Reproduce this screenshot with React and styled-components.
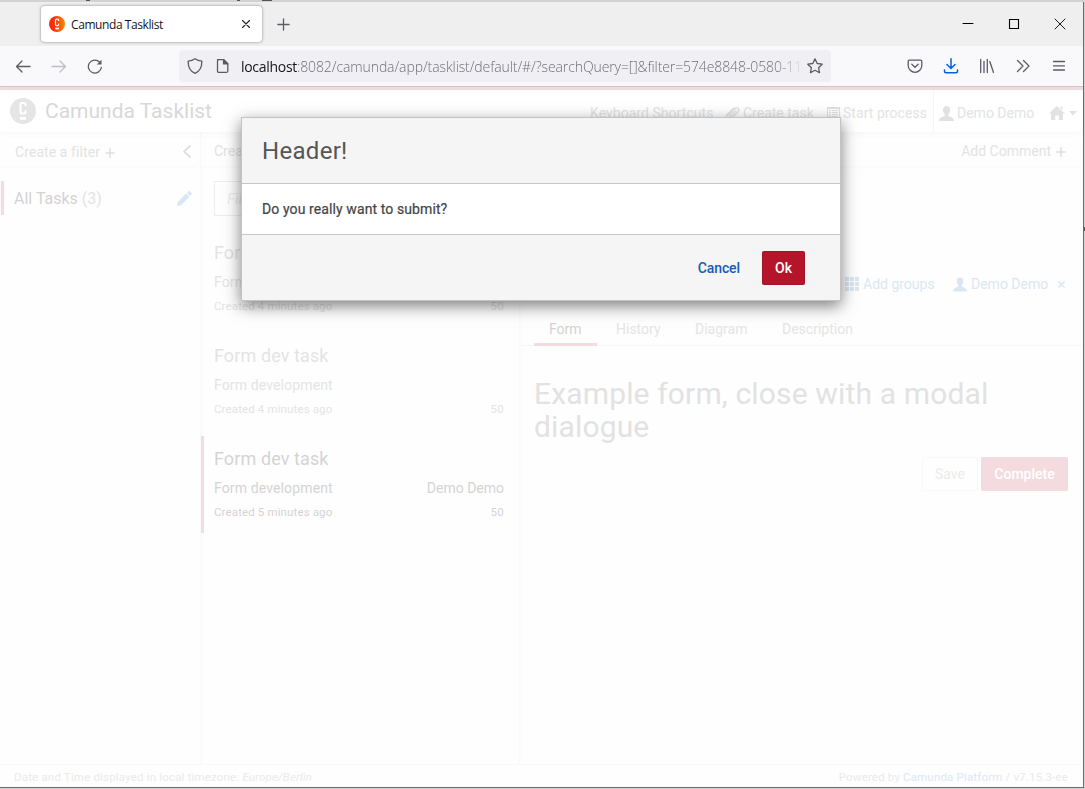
import React from 'react';
import styled, { createGlobalStyle } from 'styled-components';

const GlobalStyle = createGlobalStyle`
  * { box-sizing: border-box; }
  body { margin: 0; overflow: hidden; background: #d2d2d2; font-family: Roboto, 'Liberation Sans', sans-serif; }
  svg { display: block; flex: none; }
`;

const Desktop = styled.div`
  width: 1085px; height: 789px; padding-top: 2px; position: relative;
  background: #d2d2d2;
`;
const Behind = styled.i`
  position: absolute; top: ${p => p.$y || 0}px; left: ${p => p.$x}px;
  width: ${p => p.$w}px; height: ${p => p.$h || 1}px; background: #55555c;
`;
const Window = styled.div`
  width: 1084px; height: 786px; display: flex; flex-direction: column;
  border-right: 1px solid #6b6b6b; border-bottom: 1px solid #6b6b6b; background: #fff;
`;

/* Browser chrome */
const TabStrip = styled.div`
  height: 44px; flex: none; background: #efefef; display: flex; align-items: center; padding: 0 17px 0 41px;
`;
const BrowserTab = styled.div`
  width: 221px; height: 36px; background: #fff; border-radius: 4px; display: flex; align-items: center;
  padding: 0 10px 0 8px; box-shadow: 0 0 3px rgba(60, 60, 80, 0.6);
  font: 12px 'Open Sans', 'Noto Sans', sans-serif; color: #15141a;
`;
const TabTitle = styled.span`
  flex: 1; margin-left: 6px; white-space: nowrap; letter-spacing: -0.42px;
`;
const NewTab = styled.div`margin-left: 15px; flex: 1;`;
const WindowButtons = styled.div`display: flex; gap: 34px; align-items: center;`;
const Toolbar = styled.div`
  height: 40px; flex: none; background: #f9f9fb; display: flex; align-items: center; padding: 0 16px 0 15px;
`;
const NavButtons = styled.div`display: flex; gap: 20px; width: 164px;`;
const AddressBar = styled.div`
  width: 652px; height: 32px; border-radius: 4px; background: #f0f0f4; display: flex; align-items: center; padding: 0 8px;
`;
const Url = styled.div`
  width: 563px; margin: 1px 3px 0 10px; overflow: hidden; white-space: nowrap;
  font: 14px 'Open Sans', 'Noto Sans', sans-serif; font-weight: 300; letter-spacing: -0.1px; color: #6e6e78;
  mask-image: linear-gradient(to right, #000 535px, transparent 563px);
  b { color: #15141a; font-weight: 400; letter-spacing: -0.3px; }
`;
const ToolButtons = styled.div`display: flex; gap: 20px; margin-left: auto;`;

/* Tasklist page */
const Page = styled.div`
  position: relative; flex: 1; min-height: 0; display: flex; flex-direction: column; background: #fefefe;
  border-top: 1px solid #c9c9cc; font-size: 14px; color: #e3e3e3;
`;
const BrandLine = styled.div`height: 3px; flex: none; background: #f4dbdf;`;
const Label = styled.span`
  display: block; flex: none; white-space: nowrap; width: ${p => (p.$w ? p.$w + 'px' : 'auto')};
  letter-spacing: ${p => p.$ls || 0}px; font-style: ${p => (p.$italic ? 'italic' : 'normal')};
`;
const Header = styled.header`
  position: relative; height: 42px; flex: none; background: #fff; display: flex; align-items: center;
  padding: 0 0 0 10px; box-shadow: 0 1px 8px rgba(0, 0, 0, 0.04);
`;
const Brand = styled.div`
  display: flex; align-items: center; gap: 9px; font-size: 21px; line-height: 27px; color: #d8d8d8; width: 580px; flex: none;
`;
const HeaderItem = styled.div`
  display: flex; align-items: center; gap: ${p => p.$gap || 3}px; margin-right: ${p => p.$mr || 0}px;
  padding-top: 4px; font-size: 14px; flex: none;
`;
const Divider = styled.div`width: 1px; height: 42px; background: #f5f5f5; margin-right: 5px;`;
const Columns = styled.div`flex: 1; min-height: 0; display: flex;`;
const Column = styled.section`
  width: ${p => (p.$w ? p.$w + 'px' : 'auto')}; flex: ${p => (p.$w ? 'none' : 1)};
  border-right: ${p => (p.$w ? '1px solid #f9f9f9' : '0')}; box-shadow: ${p => (p.$w ? '2px 0 3px rgba(0,0,0,.012)' : 'none')};
`;
const ColumnBar = styled.div`
  height: 35px; display: flex; align-items: center; gap: 5px; padding: ${p => p.$pad};
  border-bottom: 1px solid #fafafa; box-shadow: 0 1px 4px rgba(0, 0, 0, 0.015); margin: 0 4px 0 0;
`;
const AddMark = styled.span`padding-top: 2px;`;
const Spacer = styled.div`flex: 1;`;
const Filter = styled.div`
  margin: 14px 0 0 1px; height: 34px; border-left: 3px solid #f5dadf; display: flex; align-items: center;
  padding: 0 8px 0 10px; font-size: 16px; color: #d3d3d3;
  em { font-style: normal; color: #e3e3e3; }
`;
const Search = styled.div`
  margin: 14px 16px 14px 13px; height: 35px; border: 1px solid #ededed; display: flex; align-items: center;
  padding-left: 12px; font-size: 15px; color: #ececec;
`;
const Task = styled.article`
  height: 97px; margin-bottom: 6px; padding: 12px 15px 0 10px;
  border-left: 3px solid ${p => (p.$active ? '#f4dbe0' : 'transparent')}; color: ${p => (p.$active ? '#d4d4d4' : '#e4e4e4')};
`;
const TaskTitle = styled.div`font-size: 18px; line-height: 22px; letter-spacing: 0.1px;`;
const TaskRow = styled.div`
  display: flex; justify-content: space-between; align-items: center;
  height: ${p => (p.$small ? 22 : 26)}px; margin-top: ${p => (p.$small ? 0 : 5)}px; font-size: ${p => (p.$small ? 11.5 : 14)}px;
`;
const Assignees = styled.div`
  margin-top: 101px; height: 32px; padding-left: 325px; display: flex; gap: 4px; align-items: center; color: #dbe7f4;
`;
const Tabs = styled.nav`
  margin-top: 13px; height: 33px; padding-left: 14px; border-bottom: 1px solid #f6f6f6; display: flex;
`;
const Tab = styled.div`
  height: 33px; line-height: 32px; width: ${p => p.$w}px; padding-left: 15px; margin-right: ${p => p.$mr || 0}px;
  color: ${p => (p.$active ? '#d3d3d3' : '#e5e5e5')}; border-bottom: 3px solid ${p => (p.$active ? '#f4dbdf' : 'transparent')};
`;
const FormTitle = styled.h2`
  margin: 31px 0 0 14px; font-size: 30px; line-height: 33px; font-weight: 400; color: #e2e2e2; letter-spacing: 0.15px;
`;
const FormActions = styled.div`display: flex; justify-content: flex-end; gap: 3px; padding: 14px 15px 0 0;`;
const Button = styled.div`
  height: 34px; width: ${p => p.$w}px; display: flex; align-items: center; justify-content: center; border-radius: 1.5px;
  font-size: 14px; font-weight: ${p => (p.$primary ? 500 : 400)};
  background: ${p => (p.$primary ? '#f4dbdf' : '#fefefe')}; color: ${p => (p.$primary ? '#fff' : '#ebebeb')};
  border: 1px solid ${p => (p.$primary ? '#f4dbdf' : '#f8f8f8')};
`;
const Footer = styled.footer`
  height: 23px; flex: none; border-top: 1px solid #f9f9f9; display: flex; justify-content: space-between; align-items: center;
  padding: 1px 15px 0 14px; font-size: 11.5px; color: #eaeaea;
  i { margin-left: 3px; }
  a { color: #dce8f5; }
`;

/* Confirmation dialog */
const Dialog = styled.div`
  position: absolute; left: 241px; top: 30px; width: 600px; height: 184px; background: #f5f5f5;
  border: 1px solid #c2c3c2; box-shadow: 0 5px 15px rgba(0, 0, 0, 0.5); display: flex; flex-direction: column; color: #4c4c4c;
`;
const DialogHeader = styled.div`
  height: 65px; padding: 0 20px; display: flex; align-items: center; font-size: 24px; color: #555;
`;
const DialogBody = styled.div`
  height: 52px; background: #fff; border: solid #c6c6c6; border-width: 1px 0; padding: 0 20px;
  display: flex; align-items: center; font-size: 14px; color: #444; -webkit-text-stroke: 0.2px #444;
`;
const DialogFooter = styled.div`
  flex: 1; display: flex; align-items: center; justify-content: flex-end; gap: 22px; padding-right: 35px;
`;
const CancelLink = styled.span`font-size: 14px; font-weight: 500; color: #155cb5; letter-spacing: -0.1px;`;
const OkButton = styled(Button)`
  background: #b5152b; border-color: #9f1426; color: #fff;
`;

const Icon = ({ s = 16, h, vb = '0 0 16 16', c = '#5b5b66', w = 1.3, fill = 'none', children }) => (
  <svg width={s} height={h || s} viewBox={vb} fill={fill} stroke={fill === 'none' ? c : 'none'} strokeWidth={w}
    strokeLinecap="round" strokeLinejoin="round">{children}</svg>
);
const Logo = ({ s, bg, id }) => (
  <svg width={s} height={s} viewBox="0 0 26 26">
    <defs><linearGradient id={id}><stop offset="0.3" stopColor={bg[0]} /><stop offset="1" stopColor={bg[1]} /></linearGradient></defs>
    <circle cx="13" cy="13" r="13" fill={`url(#${id})`} />
    <path d="M15.500 8V6.500Q15.500 5 14 5h-2Q10.500 5 10.500 6.500V14Q10.500 15.500 12 15.500h2Q15.500 15.500 15.500 14V12.500" fill="none" stroke="#fff" strokeWidth="2" />
    <path d="M10 19h6v2.800h-6z" fill="#fff" />
  </svg>
);
const User = ({ c, s = 15 }) => (
  <Icon s={s} h={15} vb="0 0 15 15" fill={c}>
    <path d="M7.500 0C5 0 4 1.700 4 4c0 1.600.6 3.200 1.700 4.200v1.300C5.700 10.600 1 11.400.4 13L0 15h15l-.4-2c-.6-1.600-5.300-2.400-5.300-3.500V8.200C10.400 7.200 11 5.600 11 4c0-2.300-1-4-3.500-4z" />
  </Icon>
);
const Plus = ({ s = 10, c = '#dfdfdf', w = 1.5 }) => (
  <Icon s={s} vb="0 0 10 10" c={c} w={w}><path d="M5 .7v8.600M.7 5h8.600" /></Icon>
);

const tasks = [
  { age: 'Created 4 minutes ago' },
  { age: 'Created 4 minutes ago' },
  { age: 'Created 5 minutes ago', assignee: 'Demo Demo', active: true },
];

export default function App() {
  return (
    <Desktop>
      <GlobalStyle />
      <Behind $x={86} $w={4} /><Behind $x={237} $w={3} /><Behind $x={262} $w={10} />
      <Behind $x={1084} $y={227} $w={1} $h={4} />
      <Window>
        <TabStrip>
          <BrowserTab>
            <Logo s={16} bg={['#fc2a0d', '#ff8a00']} id="tabLogo" />
            <TabTitle>Camunda Tasklist</TabTitle>
            <Icon s={12} vb="0 0 12 12" c="#222" w={1.1}><path d="M2.500 2.500l7 7M9.500 2.500l-7 7" /></Icon>
          </BrowserTab>
          <NewTab><Plus s={13} c="#5b5b66" w={1} /></NewTab>
          <WindowButtons>
            <Icon s={12} vb="0 0 12 12" c="#000" w={1}><path d="M1 5.500h10" /></Icon>
            <Icon s={12} vb="0 0 12 12" c="#000" w={1.1}><path d="M1.500 1.500h9v9h-9z" strokeLinejoin="miter" /></Icon>
            <Icon s={12} vb="0 0 12 12" c="#000" w={0.9}><path d="M1 1l10 10M11 1L1 11" /></Icon>
          </WindowButtons>
        </TabStrip>
        <Toolbar>
          <NavButtons>
            <Icon><path d="M1.500 8.500h13.500M7 3L1.500 8.500 7 14" /></Icon>
            <Icon c="#bdbdc3"><path d="M1 8.500h13.500M9 3l5.500 5.500L9 14" /></Icon>
            <Icon><path d="M14.300 9.500A6.500 6.500 0 1 1 12.500 4" /><path d="M14.500 1.800v4.700H9.800z" fill="#5b5b66" stroke="none" /></Icon>
          </NavButtons>
          <AddressBar>
            <Icon><path d="M8 .8c2 1.500 4.300 2.200 6.800 2.300.2 5.300-1.500 9.800-6.800 12.200C2.700 12.900 1 8.400 1.200 3.100 3.700 3 6 2.300 8 .8z" /></Icon>
            <Icon s={28} vb="-12 0 28 28"><path d="M2.500 7.600h6.300l4 4v7.300q0 1.500-1.500 1.500H4q-1.500 0-1.500-1.500V9q0-1.400 1.400-1.400z" /><path d="M8.500 7.600v4.300h4.300z" fill="#5b5b66" /></Icon>
            <Url><b>localhost</b>:8082/camunda/app/tasklist/default/#/?searchQuery=[]&amp;filter=574e8848-0580-11</Url>
            <Icon><path d="M8 .9l2.200 4.600 5 .7-3.600 3.500.9 5L8 12.300l-4.500 2.400.9-5L.8 6.200l5-.7z" /></Icon>
          </AddressBar>
          <ToolButtons>
            <Icon><path d="M2.500 2.200h11q1.300 0 1.300 1.300v4a6.800 6.800 0 0 1-13.600 0v-4q0-1.300 1.300-1.300zM4.800 6.300L8 9.300l3.200-3" /></Icon>
            <Icon c="#0061e0" w={1.5}><path d="M8 .8v9.500M4 6.500l4 4 4-4M1.500 12v1.300q0 1.500 1.500 1.500h10q1.500 0 1.500-1.500V12" /></Icon>
            <Icon><path d="M1.700 1.500v13M5 3.500v11M8.300 1.500v13M10.800 3.500l3.700 11" /></Icon>
            <Icon><path d="M2.500 2.500L8 8l-5.500 5.500M8.500 2.500L14 8l-5.500 5.500" /></Icon>
            <Icon><path d="M2.500 3.500h11M2.500 7.800h11M2.500 12h11" /></Icon>
          </ToolButtons>
        </Toolbar>
        <Page>
          <BrandLine />
          <Header>
            <Brand><Logo s={26} bg={['#e5e5e5', '#e5e5e5']} id="brandLogo" /><Label>Camunda Tasklist</Label></Brand>
            <HeaderItem $mr={12}><Label $w={123} $ls={0.05}>Keyboard Shortcuts</Label></HeaderItem>
            <HeaderItem $mr={12}>
              <Icon s={15} vb="0 0 16 16" c="#dedede" w={1.3}><path d="M12 5L6.500 10.500q-1 .8-1.700.2t0-1.700L11 2.700q1.700-1.500 3.200 0t0 3.200L7.200 13q-2.500 2.400-4.700.5t.2-4.700L9.500 2" /></Icon>
              <Label $w={72}>Create task</Label>
            </HeaderItem>
            <HeaderItem $mr={6}>
              <Icon s={13} vb="0 0 13 13" fill="#e0e0e0"><path fillRule="evenodd" d="M0 0h13v13H0zM1 2v10h11V2zM2 3h2v1H2zM5 3h6v1H5zM2 5h2v1H2zM5 5h6v1H5zM2 7h2v1H2zM5 7h6v1H5zM2 9h2v1H2zM5 9h6v1H5z" /></Icon>
              <Label $w={84} $ls={0.05}>Start process</Label>
            </HeaderItem>
            <Divider />
            <HeaderItem $mr={14}><User c="#e1e1e1" /><Label $w={78}>Demo Demo</Label></HeaderItem>
            <HeaderItem $gap={4}>
              <Icon s={16} fill="#e2e2e2"><path d="M8 1l8 7.500h-2V15H9.800v-4.500H6.200V15H2V8.500H0L8 1zM11.500 1.500h2v3.500l-2-2z" /></Icon>
              <Icon s={8} h={5} vb="0 0 8 5" fill="#e2e2e2"><path d="M0 0h8L4 4.500z" /></Icon>
            </HeaderItem>
          </Header>
          <Columns>
            <Column $w={201}>
              <ColumnBar $pad="5px 4px 0 15px">
                <Label $ls={0.08}>Create a filter</Label><AddMark><Plus /></AddMark><Spacer />
                <Icon s={10} h={13} vb="0 0 10 13" c="#dedede" w={1.7}><path d="M8 1L2 6.500 8 12" /></Icon>
              </ColumnBar>
              <Filter>
                <Label>All Tasks <em>(3)</em></Label><Spacer />
                <Icon s={15} vb="0 0 15 15" fill="#d9e7f5"><path d="M0 15l1-4.200L9.200 2.600l3.200 3.200L4.200 14zM10 1.800L11.600.2q.6-.4 1.200 0l2 2q.4.600 0 1.200L13.200 5z" /></Icon>
              </Filter>
            </Column>
            <Column $w={319}>
              <ColumnBar $pad="3px 4px 0 13px"><Label>Created</Label></ColumnBar>
              <Search><Label $italic>Filter</Label></Search>
              {tasks.map((t, i) => (
                <Task key={i} $active={t.active}>
                  <TaskTitle>Form dev task</TaskTitle>
                  <TaskRow><Label $ls={0.13}>Form development</Label><Label>{t.assignee}</Label></TaskRow>
                  <TaskRow $small><Label $ls={0.13}>{t.age}</Label><Label $ls={0.3}>50</Label></TaskRow>
                </Task>
              ))}
            </Column>
            <Column>
              <ColumnBar $pad="3px 13px 0 0"><Spacer /><Label>Add Comment</Label><AddMark><Plus /></AddMark></ColumnBar>
              <Assignees>
                <Icon s={14} vb="0 0 14 14" fill="#d9e6f4"><path d="M0 0h4v4H0zM5 0h4v4H5zM10 0h4v4h-4zM0 5h4v4H0zM5 5h4v4H5zM10 5h4v4h-4zM0 10h4v4H0zM5 10h4v4H5zM10 10h4v4h-4z" /></Icon>
                <Label $w={86}>Add groups</Label>
                <User c="#d9e6f4" s={14} />
                <Label $w={83}>Demo Demo</Label>
                <Icon s={7} vb="0 0 7 7" c="#dbe7f4" w={1.700}><path d="M1 1l5 5M6 1L1 6" /></Icon>
              </Assignees>
              <Tabs>
                <Tab $active $w={63} $mr={4}>Form</Tab>
                <Tab $w={79}>History</Tab>
                <Tab $w={87}>Diagram</Tab>
                <Tab $w={110}>Description</Tab>
              </Tabs>
              <FormTitle>Example form, close with a modal<br />dialogue</FormTitle>
              <FormActions><Button $w={56}>Save</Button><Button $primary $w={87}>Complete</Button></FormActions>
            </Column>
          </Columns>
          <Footer>
            <Label $ls={0.18}>Date and Time displayed in local timezone:<i>Europe/Berlin</i></Label>
            <Label $ls={0.17}>Powered by <a>Camunda Platform</a> / v7.15.3-ee</Label>
          </Footer>
          <Dialog>
            <DialogHeader><Label $ls={0.3}>Header!</Label></DialogHeader>
            <DialogBody><Label $ls={0.1}>Do you really want to submit?</Label></DialogBody>
            <DialogFooter><CancelLink>Cancel</CancelLink><OkButton $primary $w={43}>Ok</OkButton></DialogFooter>
          </Dialog>
        </Page>
      </Window>
    </Desktop>
  );
}
